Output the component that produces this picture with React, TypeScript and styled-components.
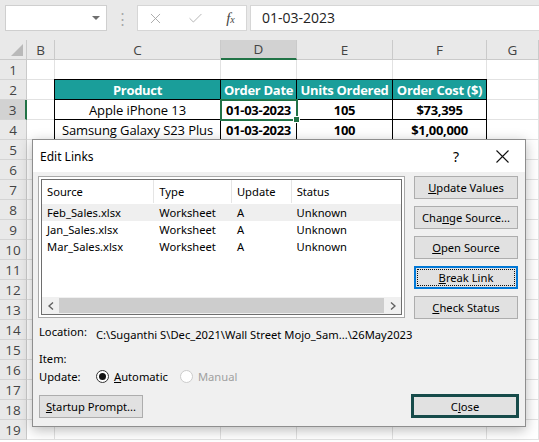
import { FC, ReactNode } from "react";
import styled, { createGlobalStyle } from "styled-components";
import { X, Check } from "lucide-react";

const GlobalStyle = createGlobalStyle`
  html, body { margin: 0; padding: 0; background: #fff; }
  body { font-family: "Open Sans", "Noto Sans", sans-serif; }
`;

const COLUMNS = ["B", "C", "D", "E", "F", "G"];
const COL_WIDTHS = "27px 28px 166px 76px 96px 94px 52px";

type CellData = { text: string; bold?: boolean; head?: boolean; selected?: boolean };

const TABLE: Record<number, CellData[]> = {
  2: [
    { text: "Product", head: true, bold: true },
    { text: "Order Date", head: true, bold: true },
    { text: "Units Ordered", head: true, bold: true },
    { text: "Order Cost ($)", head: true, bold: true },
  ],
  3: [
    { text: "Apple iPhone 13" },
    { text: "01-03-2023", bold: true, selected: true },
    { text: "105", bold: true },
    { text: "$73,395", bold: true },
  ],
  4: [
    { text: "Samsung Galaxy S23 Plus" },
    { text: "01-03-2023", bold: true },
    { text: "100", bold: true },
    { text: "$1,00,000", bold: true },
  ],
};

const LINKS = [
  { source: "Feb_Sales.xlsx", type: "Worksheet", update: "A", status: "Unknown" },
  { source: "Jan_Sales.xlsx", type: "Worksheet", update: "A", status: "Unknown" },
  { source: "Mar_Sales.xlsx", type: "Worksheet", update: "A", status: "Unknown" },
];

export default function App() {
  return (
    <>
      <GlobalStyle />
      <Screen>
        <FormulaBar>
          <NameBox>
            <DropArrow />
          </NameBox>
          <Dots>⋮</Dots>
          <FuncBox>
            <X size={17} strokeWidth={1.3} color="#a6a6a6" />
            <Check size={17} strokeWidth={1.3} color="#b0b0b0" />
            <Fx>
              <i>f</i>
              <sub>x</sub>
            </Fx>
          </FuncBox>
          <FormulaInput>01-03-2023</FormulaInput>
        </FormulaBar>
        <Sheet />
        <EditLinks />
      </Screen>
    </>
  );
}

const Sheet: FC = () => {
  const rows = Array.from({ length: 19 }, (_, i) => i + 1);
  return (
    <Grid>
      <Corner>
        <svg width="12" height="12" viewBox="0 0 12 12">
          <polygon points="12,0 12,12 0,12" fill="#b9b9b9" />
        </svg>
      </Corner>
      {COLUMNS.map((c) => (
        <ColHead key={c} $active={c === "D"}>
          {c}
        </ColHead>
      ))}
      {rows.map((r) => (
        <Row key={r} n={r} />
      ))}
    </Grid>
  );
};

const Row: FC<{ n: number }> = ({ n }) => {
  const data = TABLE[n];
  return (
    <>
      <RowHead $active={n === 3}>{n}</RowHead>
      <Cell />
      {data
        ? data.map((d, i) => (
            <TableCell
              key={i}
              $head={d.head}
              $bold={d.bold}
              $first={i === 0}
              $top={n === 2}
              $selected={d.selected}
            >
              {d.text}
            </TableCell>
          ))
        : [0, 1, 2, 3].map((i) => <Cell key={i} />)}
      <Cell />
    </>
  );
};

const U: FC<{ children: ReactNode }> = ({ children }) => <u>{children}</u>;

const EditLinks: FC = () => (
  <Dialog>
    <TitleBar>
      <Title>Edit Links</Title>
      <TitleButton>?</TitleButton>
      <TitleButton>
        <svg width="13" height="13" viewBox="0 0 13 13">
          <path d="M0.5 0.5 L12.5 12.5 M12.5 0.5 L0.5 12.5" stroke="#111" strokeWidth="1.1" />
        </svg>
      </TitleButton>
    </TitleBar>
    <Body>
      <TopRow>
        <ListBox>
          <ListHeader>
            <HeadCol $w={113}>Source</HeadCol>
            <HeadCol $w={78}>Type</HeadCol>
            <HeadCol $w={60}>Update</HeadCol>
            <HeadCol $w={110}>Status</HeadCol>
          </ListHeader>
          <ListRows>
            {LINKS.map((l, i) => (
              <ListRow key={l.source} $hot={i === 0}>
                <ListCol $w={113}>{l.source}</ListCol>
                <ListCol $w={78}>{l.type}</ListCol>
                <ListCol $w={60}>{l.update}</ListCol>
                <ListCol $w={110}>{l.status}</ListCol>
              </ListRow>
            ))}
          </ListRows>
          <HScroll>
            <ScrollArrow>
              <svg width="6" height="8" viewBox="0 0 6 8">
                <path d="M5 0.5 L1 4 L5 7.5" fill="none" stroke="#606060" strokeWidth="1.4" />
              </svg>
            </ScrollArrow>
            <Thumb />
            <ScrollArrow>
              <svg width="6" height="8" viewBox="0 0 6 8">
                <path d="M1 0.5 L5 4 L1 7.5" fill="none" stroke="#606060" strokeWidth="1.4" />
              </svg>
            </ScrollArrow>
          </HScroll>
        </ListBox>
        <ButtonColumn>
          <Button>
            <span>
              <U>U</U>pdate Values
            </span>
          </Button>
          <Button>
            <span>
              Cha<U>n</U>ge Source...
            </span>
          </Button>
          <Button>
            <span>
              <U>O</U>pen Source
            </span>
          </Button>
          <Button $focused>
            <span>
              <U>B</U>reak Link
            </span>
          </Button>
          <Button>
            <span>
              <U>C</U>heck Status
            </span>
          </Button>
        </ButtonColumn>
      </TopRow>
      <InfoRow $gap={7}>
        <Label $raise>Location:</Label>
        <span>C:\Suganthi S\Dec_2021\Wall Street Mojo_Sam...\26May2023</span>
      </InfoRow>
      <InfoRow $gap={8}>
        <Label>Item:</Label>
      </InfoRow>
      <InfoRow $gap={2}>
        <Label>Update:</Label>
        <RadioOption>
          <Radio $checked />
          <span>
            <U>A</U>utomatic
          </span>
        </RadioOption>
        <RadioOption $disabled>
          <Radio $disabled />
          <span>Manual</span>
        </RadioOption>
      </InfoRow>
      <Footer>
        <Button $width={104}>
          <span>
            <U>S</U>tartup Prompt...
          </span>
        </Button>
        <CloseButton>
          <span>
            C<U>l</U>ose
          </span>
        </CloseButton>
      </Footer>
    </Body>
  </Dialog>
);

/* ---------- page ---------- */

const Screen = styled.div`
  position: relative;
  width: 539px;
  height: 442px;
  overflow: hidden;
  background: #fff;
`;

const FormulaBar = styled.div`
  height: 40px;
  background: #e9e9e9;
  display: flex;
  align-items: flex-start;
  padding: 5px 0 0 5px;
  box-sizing: border-box;
`;

const NameBox = styled.div`
  width: 102px;
  height: 26px;
  background: #fff;
  border: 1px solid #cfcfcf;
  box-sizing: border-box;
  display: flex;
  align-items: center;
  justify-content: flex-end;
  padding-right: 6px;
`;

const DropArrow = styled.span`
  width: 0;
  height: 0;
  border-left: 4px solid transparent;
  border-right: 4px solid transparent;
  border-top: 4px solid #6f6f6f;
`;

const Dots = styled.div`
  width: 30px;
  height: 26px;
  line-height: 26px;
  text-align: center;
  color: #a8a8a8;
  font-size: 15px;
`;

const FuncBox = styled.div`
  width: 110px;
  height: 26px;
  background: #fff;
  border: 1px solid #d6d6d6;
  box-sizing: border-box;
  display: flex;
  align-items: center;
  justify-content: space-around;
  padding: 0 6px 0 4px;
  gap: 12px;
`;

const Fx = styled.span`
  font-family: "Liberation Serif", "DejaVu Serif", serif;
  font-size: 15px;
  color: #444;
  i {
    font-style: italic;
  }
  sub {
    font-size: 10px;
    font-style: italic;
    vertical-align: 0;
  }
`;

const FormulaInput = styled.div`
  flex: 1;
  margin-left: 3px;
  height: 26px;
  background: #fff;
  border: 1px solid #d6d6d6;
  border-right: none;
  box-sizing: border-box;
  padding-left: 11px;
  line-height: 24px;
  font-size: 14px;
  color: #222;
`;

const Grid = styled.div`
  display: grid;
  grid-template-columns: ${COL_WIDTHS};
  grid-auto-rows: 20px;
  font-size: 14px;
`;

const HeaderBase = styled.div`
  background: #e9e9e9;
  color: #444;
  display: flex;
  align-items: center;
  justify-content: center;
  box-sizing: border-box;
  font-size: 13.5px;
`;

const Corner = styled(HeaderBase)`
  border-right: 1px solid #cacaca;
  border-bottom: 1px solid #cacaca;
  justify-content: flex-end;
  align-items: flex-end;
  padding: 0 3px 3px 0;
`;

const ColHead = styled(HeaderBase)<{ $active?: boolean }>`
  border-right: 1px solid #cacaca;
  border-bottom: ${({ $active }) => ($active ? "2px solid #217346" : "1px solid #cacaca")};
  background: ${({ $active }) => ($active ? "#d2d2d2" : "#e9e9e9")};
`;

const RowHead = styled(HeaderBase)<{ $active?: boolean }>`
  border-bottom: 1px solid #d4d4d4;
  border-right: ${({ $active }) => ($active ? "2px solid #217346" : "1px solid #cacaca")};
  background: ${({ $active }) => ($active ? "#d2d2d2" : "#e9e9e9")};
`;

const Cell = styled.div`
  border-right: 1px solid #e2e2e2;
  border-bottom: 1px solid #e2e2e2;
  box-sizing: border-box;
`;

const TableCell = styled.div<{
  $head?: boolean;
  $bold?: boolean;
  $first?: boolean;
  $top?: boolean;
  $selected?: boolean;
}>`
  position: relative;
  box-sizing: border-box;
  border-right: 1px solid #000;
  border-bottom: 1px solid #000;
  box-shadow: ${({ $first, $top }) =>
    [$first ? "-1px 0 0 #000" : "", $top ? "0 -1px 0 #000" : "", $first && $top ? "-1px -1px 0 #000" : ""]
      .filter(Boolean)
      .join(", ") || "none"};
  background: ${({ $head }) => ($head ? "#1a9e9a" : "#fff")};
  color: ${({ $head }) => ($head ? "#fff" : "#000")};
  font-weight: ${({ $bold }) => ($bold ? 700 : 400)};
  font-size: 13px;
  letter-spacing: ${({ $bold }) => ($bold ? "-0.3px" : "-0.1px")};
  display: flex;
  align-items: center;
  justify-content: center;
  white-space: nowrap;
  overflow: visible;
  ${({ $selected }) =>
    $selected &&
    `
    z-index: 1;
    outline: 2px solid #217346;
    outline-offset: -1px;
    &::after {
      content: "";
      position: absolute;
      right: -4px;
      bottom: -4px;
      width: 5px;
      height: 5px;
      background: #217346;
      border: 1px solid #fff;
    }
  `}
`;

/* ---------- dialog ---------- */

const Dialog = styled.div`
  position: absolute;
  left: 32px;
  top: 139px;
  width: 494px;
  height: 288px;
  box-sizing: border-box;
  background: #f0f0f0;
  border: 1px solid #8e8e8e;
  box-shadow: 0 3px 12px rgba(0, 0, 0, 0.28);
  font-family: "Noto Sans", "Open Sans", sans-serif;
  font-size: 11.2px;
  color: #000;
  display: flex;
  flex-direction: column;
`;

const TitleBar = styled.div`
  height: 32px;
  background: #fff;
  display: flex;
  align-items: center;
  padding-left: 7px;
`;

const Title = styled.div`
  flex: 1;
  font-size: 12px;
`;

const TitleButton = styled.div`
  width: 46px;
  height: 32px;
  display: flex;
  align-items: center;
  justify-content: center;
  font-size: 14px;
`;

const Body = styled.div`
  flex: 1;
  padding: 4px 6px 0 5px;
  display: flex;
  flex-direction: column;
`;

const TopRow = styled.div`
  display: flex;
  gap: 9px;
`;

const ListBox = styled.div`
  width: 367px;
  height: 142px;
  box-sizing: border-box;
  background: #fff;
  border: 1px solid #a9a9a9;
  box-shadow: inset 0 0 0 2px #fff, inset 0 0 0 3px #6e6e6e;
  padding: 3px;
  display: flex;
  flex-direction: column;
`;

const ListHeader = styled.div`
  display: flex;
  height: 23px;
  margin-bottom: 1px;
`;

const HeadCol = styled.div<{ $w: number }>`
  width: ${({ $w }) => $w}px;
  box-sizing: border-box;
  padding-left: 5px;
  border-right: 1px solid #e5e5e5;
  display: flex;
  align-items: center;
  &:last-child {
    border-right: none;
  }
`;

const ListRows = styled.div`
  flex: 1;
`;

const ListRow = styled.div<{ $hot?: boolean }>`
  display: flex;
  height: 17px;
  align-items: center;
  background: ${({ $hot }) => ($hot ? "#efefef" : "transparent")};
`;

const ListCol = styled.div<{ $w: number }>`
  width: ${({ $w }) => $w}px;
  padding-left: 5px;
  box-sizing: border-box;
`;

const HScroll = styled.div`
  height: 17px;
  background: #f0f0f0;
  display: flex;
  align-items: center;
`;

const ScrollArrow = styled.div`
  width: 17px;
  height: 17px;
  display: flex;
  align-items: center;
  justify-content: center;
`;

const Thumb = styled.div`
  flex: 1;
  height: 15px;
  background: #cdcdcd;
`;

const ButtonColumn = styled.div`
  display: flex;
  flex-direction: column;
  gap: 7px;
`;

const Button = styled.div<{ $focused?: boolean; $width?: number }>`
  width: ${({ $width }) => $width ?? 104}px;
  height: 23px;
  box-sizing: border-box;
  background: #e1e1e1;
  border: 1px solid ${({ $focused }) => ($focused ? "#0078d7" : "#adadad")};
  box-shadow: ${({ $focused }) => ($focused ? "inset 0 0 0 1px #0078d7" : "none")};
  outline: ${({ $focused }) => ($focused ? "1px dotted #111" : "none")};
  outline-offset: -4px;
  display: flex;
  align-items: center;
  justify-content: center;
  white-space: nowrap;
`;

const InfoRow = styled.div<{ $gap: number }>`
  display: flex;
  align-items: center;
  height: 16px;
  margin-top: ${({ $gap }) => $gap}px;
  padding-left: 1px;
`;

const Label = styled.span<{ $raise?: boolean }>`
  width: 57px;
  flex-shrink: 0;
  position: relative;
  top: ${({ $raise }) => ($raise ? "-3px" : "0")};
`;

const RadioOption = styled.span<{ $disabled?: boolean }>`
  display: inline-flex;
  align-items: center;
  gap: 5px;
  margin-right: 12px;
  color: ${({ $disabled }) => ($disabled ? "#a0a0a0" : "#000")};
`;

const Radio = styled.span<{ $checked?: boolean; $disabled?: boolean }>`
  width: 13px;
  height: 13px;
  box-sizing: border-box;
  border-radius: 50%;
  background: #fff;
  border: 1px solid ${({ $disabled }) => ($disabled ? "#cccccc" : "#333")};
  display: flex;
  align-items: center;
  justify-content: center;
  &::after {
    content: "";
    width: 7px;
    height: 7px;
    border-radius: 50%;
    background: ${({ $checked }) => ($checked ? "#111" : "transparent")};
  }
`;

const Footer = styled.div`
  display: flex;
  justify-content: space-between;
  align-items: center;
  margin-top: 10px;
  padding-left: 1px;
`;

const CloseButton = styled.div`
  width: 108px;
  height: 24px;
  box-sizing: border-box;
  background: #e1e1e1;
  border: 3px solid #164b4a;
  display: flex;
  align-items: center;
  justify-content: center;
`;
